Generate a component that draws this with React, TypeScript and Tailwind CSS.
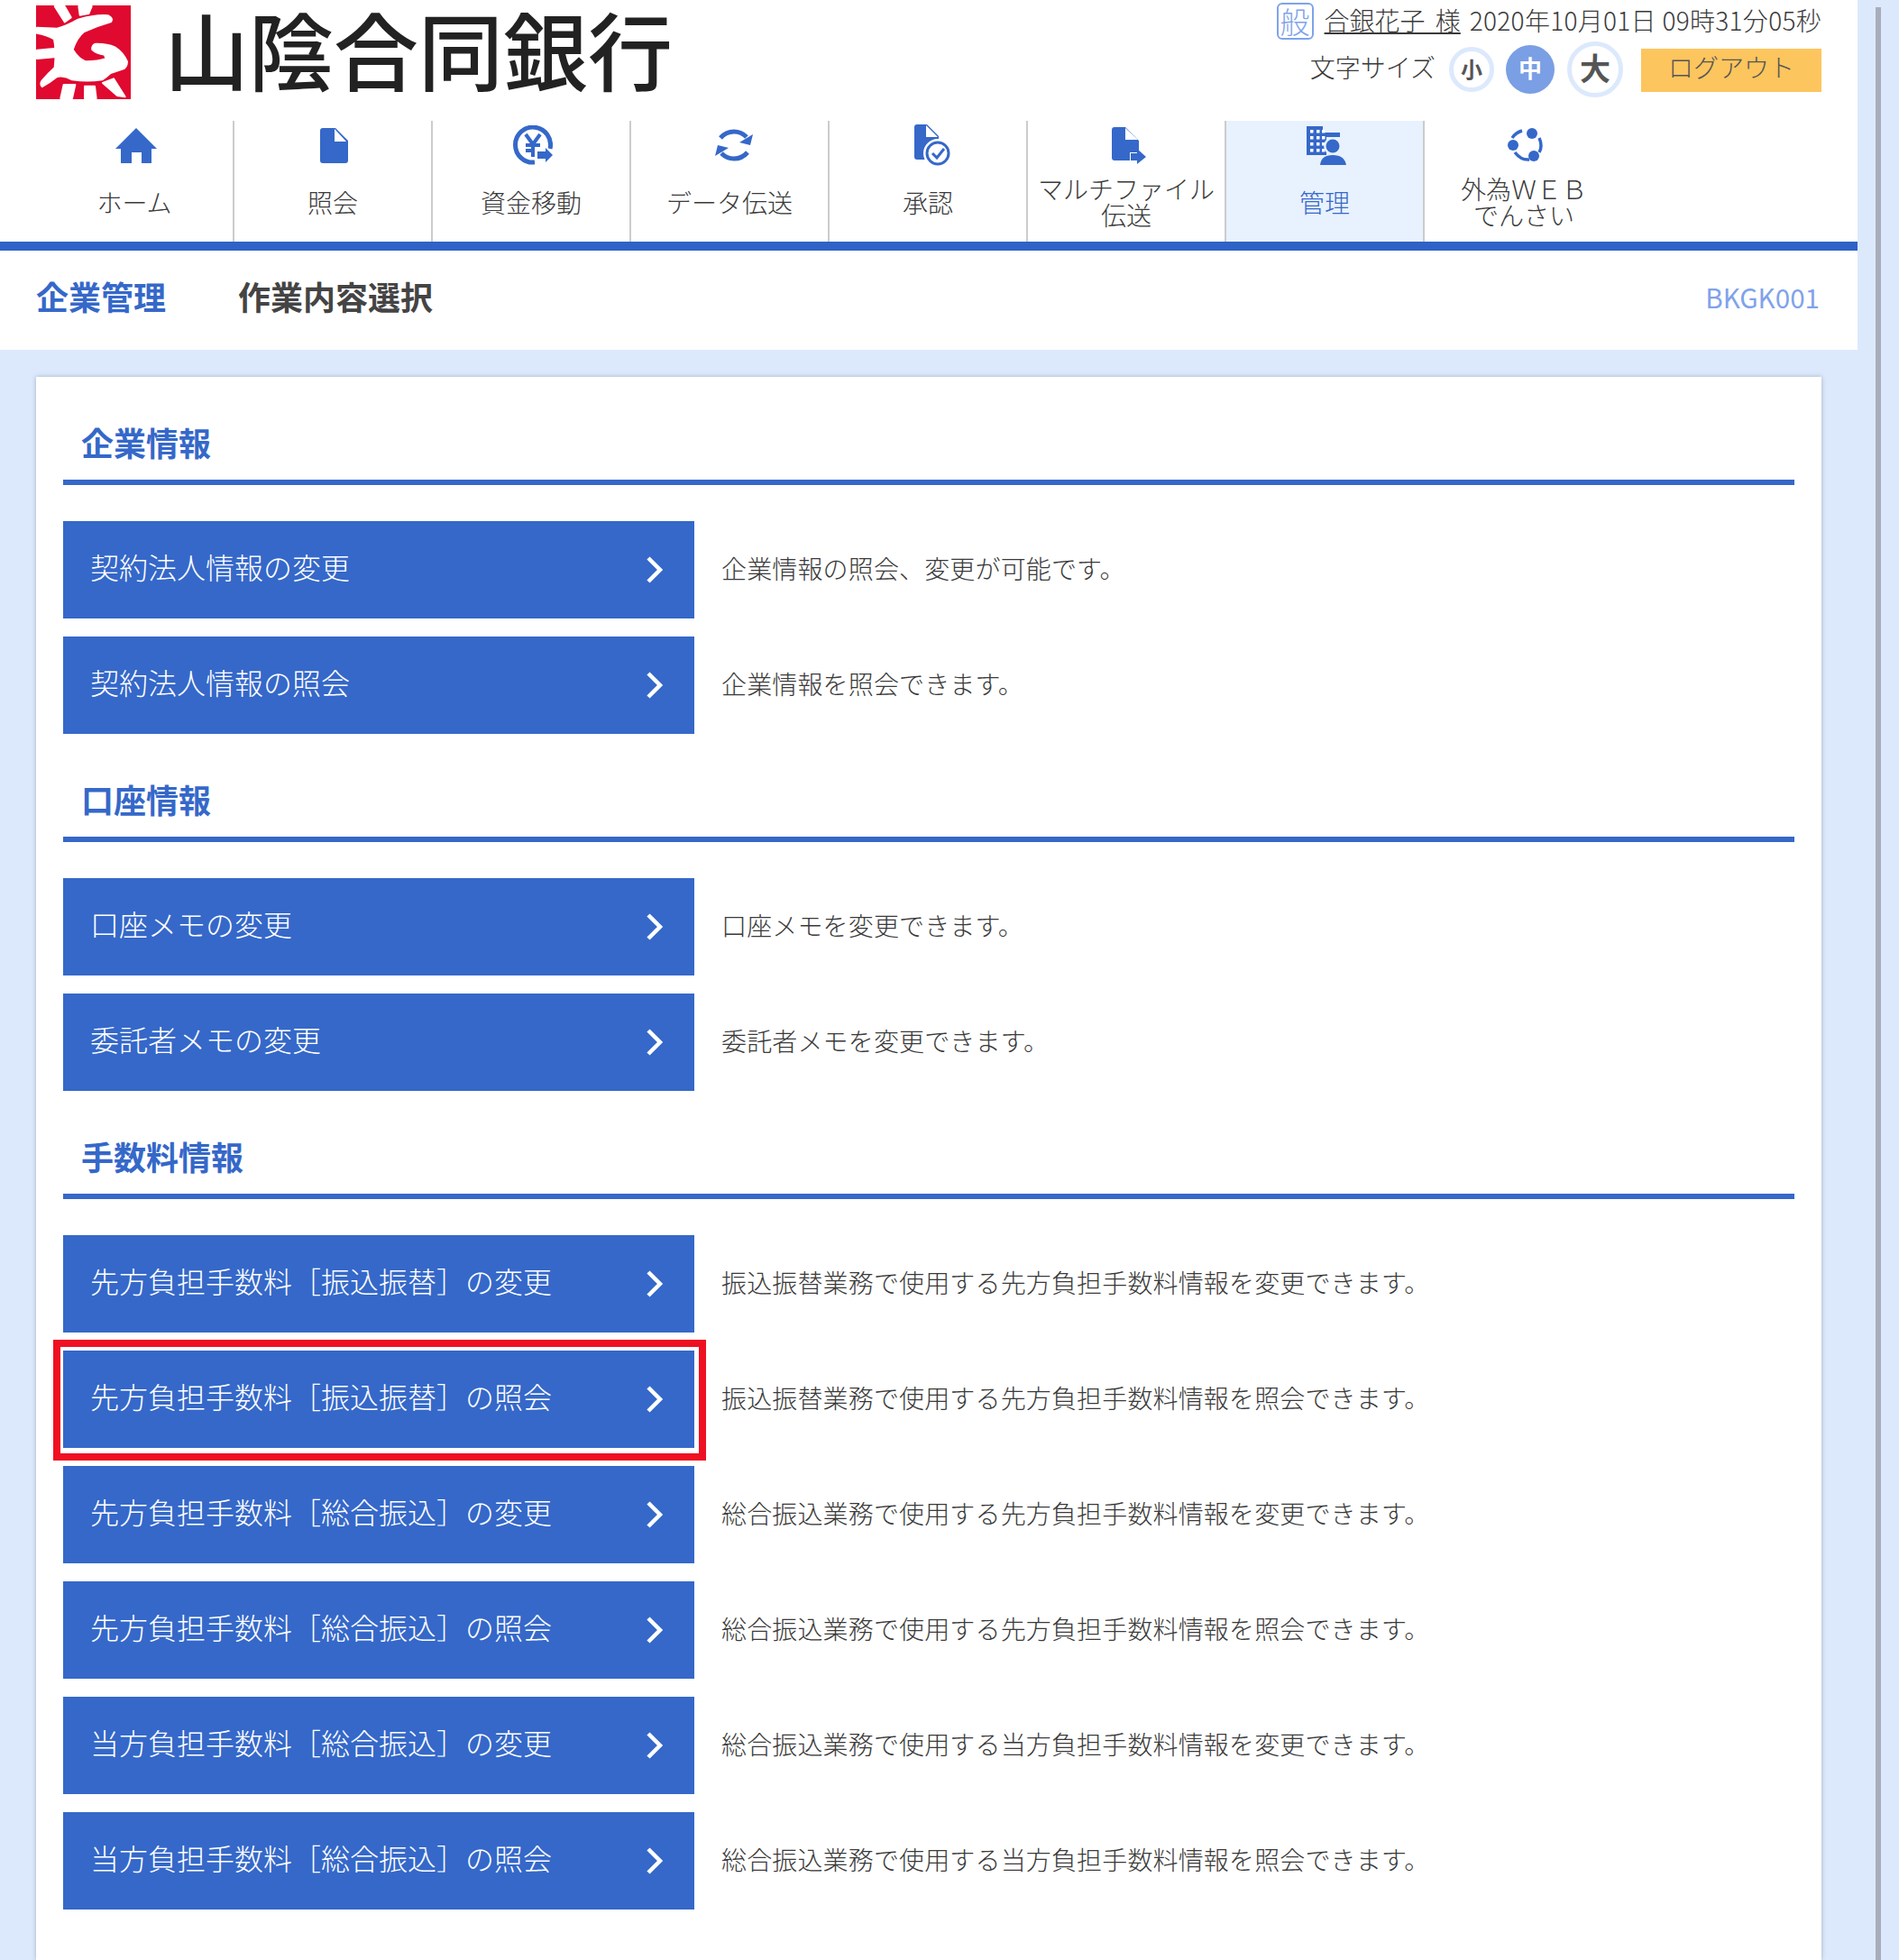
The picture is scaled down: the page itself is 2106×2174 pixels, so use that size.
import React from "react";

const BLUE = "#3568c9";

function LogoMark() {
  return (
    <svg width="105" height="104" viewBox="30 18 315 312" className="block shrink-0">
      <rect x="30" y="18" width="315" height="312" fill="#e0092f" />
      <g fill="#fff" stroke="#fff" strokeWidth="6" strokeLinejoin="round">
        <path d="M33 92 L100 95 Q130 88 170 65 Q230 48 270 52 Q288 62 280 72 Q235 85 190 105 Q165 125 152 165 Q170 195 195 205 Q235 205 262 195 L258 182 Q230 178 217 165 Q215 150 228 146 Q265 145 292 157 Q320 175 333 205 Q332 225 318 230 L278 243 Q265 255 250 265 Q200 272 150 265 Q125 250 100 255 Q75 275 50 288 Q42 280 50 268 Q70 245 92 225 Q98 170 90 130 Q65 115 33 110 Z" />
        <path d="M92 21 L125 21 L146 58 L125 73 Z" />
        <path d="M172 21 L215 21 L205 45 L176 50 Z" />
        <path d="M33 167 L90 162 L90 190 L33 195 Z" />
        <path d="M122 282 L160 282 L150 327 L112 327 Z" />
        <path d="M192 287 L225 287 L230 327 L192 327 Z" />
        <path d="M252 276 L288 262 L326 322 L300 318 Z" />
      </g>
    </svg>
  );
}

function HomeIcon() {
  return (
    <svg width="46" height="39" viewBox="0 0 46 39" className="block">
      <path fill={BLUE} d="M23 0 L46 23 L40 23 L40 39 L29 39 L29 27 L18 27 L18 39 L6 39 L6 23 L0 23 Z" />
    </svg>
  );
}
function DocIcon() {
  return (
    <svg width="31" height="39" viewBox="0 0 31 39" className="block">
      <path fill={BLUE} d="M3 0 H17 L31 14 V36 Q31 39 28 39 H3 Q0 39 0 36 V3 Q0 0 3 0 Z" />
      <path fill="#fff" d="M16 1 L16 15 L29 15 Z" />
    </svg>
  );
}
function YenIcon() {
  return (
    <svg width="44" height="44" viewBox="0 0 44 44" className="block">
      <path fill="none" stroke={BLUE} strokeWidth="5" d="M24 41 A19.5 19.5 0 1 1 41 26" />
      <path fill="none" stroke={BLUE} strokeWidth="4" d="M14 10 L22 21 L30 10 M22 21 V35 M14 22 H30 M14 28 H26" />
      <path fill="#fff" d="M24 26 H36 V22 L46 33 L36 44 H24 Z" />
      <path fill={BLUE} d="M27 29 H36 V25 L44 33 L36 41 V37 H27 Z" />
    </svg>
  );
}
function SyncIcon() {
  return (
    <svg width="42" height="36" viewBox="0 0 42 36" className="block">
      <g fill="none" stroke={BLUE} strokeWidth="5">
        <path d="M6 10 Q12 3 21 3 Q29 3 35 9" />
        <path d="M36 26 Q30 33 21 33 Q13 33 7 27" />
      </g>
      <path fill={BLUE} d="M42 6 L39 18 L27 15 Z" />
      <path fill={BLUE} d="M0 30 L3 18 L15 21 Z" />
    </svg>
  );
}
function ApprovalIcon() {
  return (
    <svg width="40" height="46" viewBox="0 0 40 46" className="block">
      <path fill={BLUE} d="M3 0 H14 L27 13 V39 H3 Q0 39 0 36 V3 Q0 0 3 0 Z" />
      <path fill="#fff" d="M13 1 L13 14 L26 14 Z" />
      <circle cx="26" cy="32" r="16" fill="#fff" />
      <circle cx="26" cy="32" r="12" fill="#fff" stroke={BLUE} strokeWidth="3" />
      <path fill="none" stroke={BLUE} strokeWidth="3" d="M20 32 L25 37 L33 27" />
    </svg>
  );
}
function MultiIcon() {
  return (
    <svg width="38" height="41" viewBox="0 0 38 41" className="block">
      <path fill={BLUE} d="M3 0 H15 L30 15 V28 H20 V37 H3 Q0 37 0 34 V3 Q0 0 3 0 Z" />
      <path fill="#fff" d="M15 1 L15 14 L29 14 Z" />
      <path fill={BLUE} d="M21 29 H28 V24 L38 33 L28 41 V37 H21 Z" />
    </svg>
  );
}
function KanriIcon() {
  const wins: [number, number][] = [];
  for (const y of [4, 11, 18, 25]) for (const x of [4, 11, 17]) wins.push([x, y]);
  return (
    <svg width="44" height="43" viewBox="0 0 44 43" className="block">
      <path fill={BLUE} d="M0 0 H18 V7 H37 V12 H22 V32 H0 Z" />
      {wins.map(([x, y]) => (
        <rect key={x + "-" + y} x={x} y={y} width="3.5" height="3.5" fill="#fff" />
      ))}
      <circle cx="29" cy="22" r="10" fill="#e8f1fe" />
      <circle cx="29" cy="22" r="7.5" fill={BLUE} />
      <path fill="#e8f1fe" d="M14 43 Q16 31 29 31 Q42 31 44 43 Z" />
      <path fill={BLUE} d="M15 43 Q16 32 29 32 Q42 32 44 43 Z" />
    </svg>
  );
}
function GlobeIcon() {
  return (
    <svg width="40" height="38" viewBox="0 0 40 38" className="block">
      <g fill="none" stroke={BLUE} strokeWidth="3.5">
        <path d="M5 11 Q9 5 16 3" />
        <path d="M35 11 Q39 20 35 27" />
        <path d="M8 27 Q15 36 24 35" />
      </g>
      <circle cx="27" cy="6" r="6" fill={BLUE} />
      <circle cx="6" cy="19" r="6" fill={BLUE} />
      <circle cx="29" cy="31" r="6" fill={BLUE} />
    </svg>
  );
}

function Chevron() {
  return (
    <svg width="20" height="30" viewBox="0 0 20 30" className="block shrink-0">
      <path d="M3 2 L16 15 L3 28" fill="none" stroke="#fff" strokeWidth="4.5" />
    </svg>
  );
}

const NAV: { icon: React.ReactNode; lines: string[]; shift: string; active?: boolean; last?: boolean }[] = [
  { icon: <HomeIcon />, lines: ["ホーム"], shift: "pl-[4px]" },
  { icon: <DocIcon />, lines: ["照会"], shift: "pl-[3px]" },
  { icon: <YenIcon />, lines: ["資金移動"], shift: "pl-[4px]" },
  { icon: <SyncIcon />, lines: ["データ伝送"], shift: "pl-[9px]" },
  { icon: <ApprovalIcon />, lines: ["承認"], shift: "pl-[10px]" },
  { icon: <MultiIcon />, lines: ["マルチファイル", "伝送"], shift: "pl-[6px]" },
  { icon: <KanriIcon />, lines: ["管理"], shift: "pl-[4px]", active: true },
  { icon: <GlobeIcon />, lines: ["外為ＷＥＢ", "でんさい"], shift: "pl-[4px]", last: true },
];

const SECTIONS: { title: string; rows: { label: string; desc: string; marked?: boolean }[] }[] = [
  {
    title: "企業情報",
    rows: [
      { label: "契約法人情報の変更", desc: "企業情報の照会、変更が可能です。" },
      { label: "契約法人情報の照会", desc: "企業情報を照会できます。" },
    ],
  },
  {
    title: "口座情報",
    rows: [
      { label: "口座メモの変更", desc: "口座メモを変更できます。" },
      { label: "委託者メモの変更", desc: "委託者メモを変更できます。" },
    ],
  },
  {
    title: "手数料情報",
    rows: [
      { label: "先方負担手数料［振込振替］の変更", desc: "振込振替業務で使用する先方負担手数料情報を変更できます。" },
      { label: "先方負担手数料［振込振替］の照会", desc: "振込振替業務で使用する先方負担手数料情報を照会できます。", marked: true },
      { label: "先方負担手数料［総合振込］の変更", desc: "総合振込業務で使用する先方負担手数料情報を変更できます。" },
      { label: "先方負担手数料［総合振込］の照会", desc: "総合振込業務で使用する先方負担手数料情報を照会できます。" },
      { label: "当方負担手数料［総合振込］の変更", desc: "総合振込業務で使用する当方負担手数料情報を変更できます。" },
      { label: "当方負担手数料［総合振込］の照会", desc: "総合振込業務で使用する当方負担手数料情報を照会できます。" },
    ],
  },
];

export default function App() {
  return (
    <div className="flex h-[2174px] w-[2106px] overflow-hidden bg-[#dce9fd] font-['Noto_Sans_CJK_JP','Liberation_Sans',sans-serif] font-light text-[#3a3a3a]">
      <div className="flex w-[2060px] shrink-0 flex-col">
        <header className="bg-white">
          <div className="flex h-[134px] justify-between pr-[40px] pl-[40px]">
            <div className="flex items-start pt-[6px]">
              <LogoMark />
              <div className="ml-[37px] text-[94px] leading-[94px] font-medium whitespace-nowrap text-[#222]">山陰合同銀行</div>
            </div>
            <div className="flex flex-col items-end pt-[3px]">
              <div className="flex h-[41px] items-center">
                <span className="flex h-[41px] w-[41px] items-center justify-center rounded-[6px] border-2 border-[#7ea4ea] text-[33px] leading-none text-[#7ea4ea]">般</span>
                <span className="ml-[12px] pb-[3px] text-[28px] leading-[34px] whitespace-nowrap underline decoration-2 underline-offset-2 [word-spacing:5px]">合銀花子 様</span>
                <span className="ml-[10px] pb-[3px] text-[28px] leading-[34px] tracking-[0.3px] whitespace-nowrap">2020年10月01日 09時31分05秒</span>
              </div>
              <div className="mt-[2px] flex h-[62px] items-center">
                <span className="pb-[7px] text-[28px] leading-none whitespace-nowrap">文字サイズ</span>
                <span className="ml-[15px] flex h-[50px] w-[50px] items-center justify-center rounded-full border-[5px] border-[#dce9fd] pb-[2px] text-[24px] leading-none font-bold text-[#555]">小</span>
                <span className="ml-[13px] flex h-[54px] w-[54px] items-center justify-center rounded-full bg-[#7a9fe4] pb-[4px] text-[26px] leading-none font-bold text-white">中</span>
                <span className="ml-[14px] flex h-[62px] w-[62px] items-center justify-center rounded-full border-[5px] border-[#dce9fd] pb-[4px] text-[34px] leading-none font-bold text-[#555]">大</span>
                <span className="mt-[2px] ml-[20px] flex h-[48px] w-[200px] items-center justify-center bg-[#fdc55e] pb-[8px] text-[28px] leading-none text-[#555]">ログアウト</span>
              </div>
            </div>
          </div>
          <nav className="flex h-[144px] border-b-[10px] border-[#2f62c6] pl-[40px]">
            {NAV.map((n) => (
              <div
                key={n.lines[0]}
                className={
                  "flex w-[220px] flex-col items-center " +
                  (n.last ? "" : "border-r-2 border-[#ccc] ") +
                  (n.active ? "bg-[#e8f1fe] text-[#3568c9]" : "")
                }
              >
                <div className={"flex h-[54px] items-center justify-center " + n.shift}>{n.icon}</div>
                <div className="mt-[6px] flex h-[60px] flex-col items-center justify-center text-[28px] leading-[29px] whitespace-nowrap">
                  {n.lines.map((l) => (
                    <span key={l} className="block">{l}</span>
                  ))}
                </div>
              </div>
            ))}
          </nav>
          <div className="flex h-[110px] items-center justify-between pr-[42px] pl-[40px] pb-[10px]">
            <div className="flex items-center text-[36px] leading-none font-bold">
              <span className="text-[#3568c9]">企業管理</span>
              <span className="ml-[80px] text-[#444]">作業内容選択</span>
            </div>
            <span className="mt-[4px] text-[29.6px] leading-none font-normal text-[#7fa3ea]">BKGK001</span>
          </div>
        </header>
        <main className="flex-1 pt-[30px] pl-[40px]">
          <div className="h-full w-[1980px] bg-white px-[30px] pt-[40px] shadow-[0_0_5px_rgba(0,0,0,0.25)]">
            {SECTIONS.map((s) => (
              <section key={s.title} className="mb-[40px]">
                <h2 className="flex h-[80px] items-center border-b-[6px] border-[#3568c9] pb-[10px] pl-[20px] text-[36px] leading-none font-bold text-[#3568c9]">{s.title}</h2>
                <div className="mt-[40px] flex flex-col gap-[20px]">
                  {s.rows.map((r) => (
                    <div key={r.label} className="flex items-center">
                      <div className="relative flex h-[108px] w-[700px] shrink-0 items-center justify-between bg-[#3568c9] pr-[34px] pl-[30px] text-white">
                        <span className="pb-[8px] text-[32px] leading-none whitespace-nowrap">{r.label}</span>
                        <Chevron />
                        {r.marked && <span className="absolute top-[-12px] right-[-13px] bottom-[-14px] left-[-11px] border-[8px] border-[#ee1122]" />}
                      </div>
                      <p className="ml-[30px] pb-[4px] text-[28px] leading-none tracking-[0.15px] whitespace-nowrap">{r.desc}</p>
                    </div>
                  ))}
                </div>
              </section>
            ))}
          </div>
        </main>
      </div>
      <div className="flex-1 pl-[20px]">
        <div className="mt-[8px] h-full w-[6px] bg-[#a9adbb]" />
      </div>
    </div>
  );
}
